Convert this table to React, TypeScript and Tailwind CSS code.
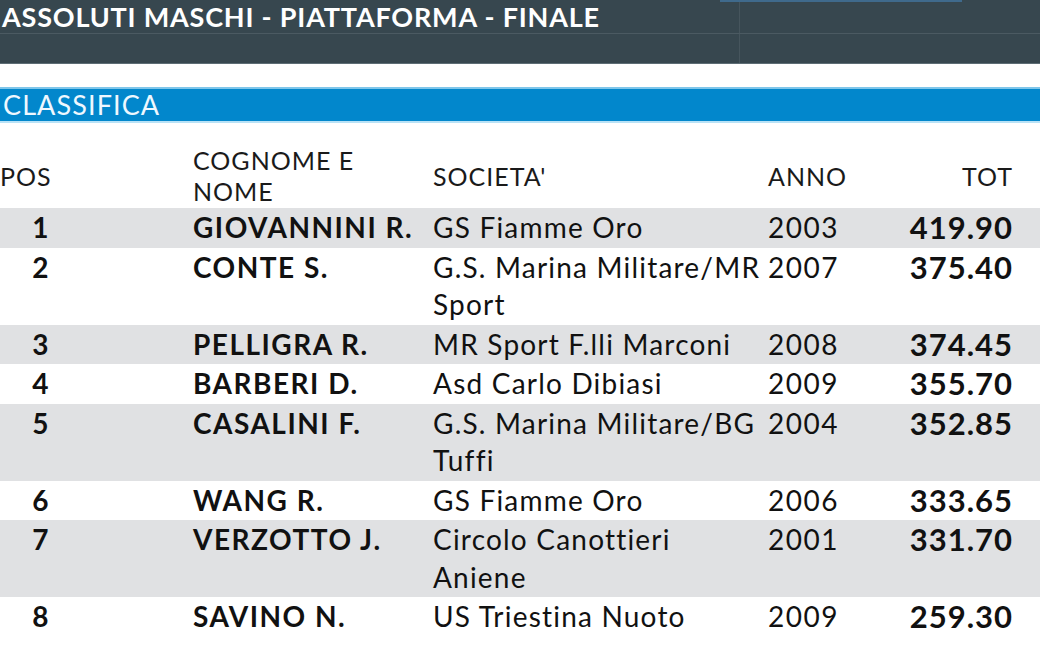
import React from 'react';

type Row = {
  pos: number;
  name: string;
  club: string;
  year: string;
  tot: string;
};

const rows: Row[] = [
  { pos: 1, name: 'GIOVANNINI R.', club: 'GS Fiamme Oro', year: '2003', tot: '419.90' },
  { pos: 2, name: 'CONTE S.', club: 'G.S. Marina Militare/MR Sport', year: '2007', tot: '375.40' },
  { pos: 3, name: 'PELLIGRA R.', club: 'MR Sport F.lli Marconi', year: '2008', tot: '374.45' },
  { pos: 4, name: 'BARBERI D.', club: 'Asd Carlo Dibiasi', year: '2009', tot: '355.70' },
  { pos: 5, name: 'CASALINI F.', club: 'G.S. Marina Militare/BG Tuffi', year: '2004', tot: '352.85' },
  { pos: 6, name: 'WANG R.', club: 'GS Fiamme Oro', year: '2006', tot: '333.65' },
  { pos: 7, name: 'VERZOTTO J.', club: 'Circolo Canottieri Aniene', year: '2001', tot: '331.70' },
  { pos: 8, name: 'SAVINO N.', club: 'US Triestina Nuoto', year: '2009', tot: '259.30' },
];

export default function App() {
  return (
    <div className="w-[1040px] h-[646px] overflow-hidden bg-white" style={{ fontFamily: 'Lato, "Open Sans", sans-serif' }}>
      {/* Event header */}
      <div className="relative bg-[#37474f] border-b border-[#5d6d75]">
        <div className="absolute top-0 left-[720px] w-[242px] h-[2px] bg-[#3f6a8c]" />
        <div className="flex h-[34px] border-b border-[#4b5a62]">
          <div className="w-[740px] border-r border-[#46555d] text-white text-[27px] font-bold tracking-[0.8px] leading-[34px] whitespace-nowrap pl-[2px]">
            ASSOLUTI MASCHI - PIATTAFORMA - FINALE
          </div>
          <div className="flex-1" />
        </div>
        <div className="flex h-[29px]">
          <div className="w-[740px] border-r border-[#46555d]" />
          <div className="flex-1" />
        </div>
      </div>

      <div className="h-[23px]" />

      {/* Section bar */}
      <div className="h-[36px] bg-[#0287cc] border-t-2 border-b-2 border-t-[#7fc6ea] border-b-[#b9e2f6] text-[#eef8ff] text-[27px] tracking-[1.1px] leading-[32px] pl-[3px]">
        CLASSIFICA
      </div>

      {/* Table */}
      <div className="mt-[21px] text-[#111]">
        <div className="grid grid-cols-[193px_240px_335px_1fr_150px] items-center h-[64px] text-[25px] tracking-[1px] leading-[31px] text-[#1a1a1a]">
          <div>POS</div>
          <div>
            COGNOME E<br />
            NOME
          </div>
          <div>SOCIETA'</div>
          <div>ANNO</div>
          <div className="text-right pr-[27px]">TOT</div>
        </div>

        {rows.map((r, i) => (
          <div
            key={r.pos}
            className={`grid grid-cols-[193px_240px_335px_1fr_150px] items-start py-[1px] text-[28px] tracking-[1.5px] leading-[37.5px] ${
              i % 2 === 0 ? 'bg-[#e0e1e3]' : 'bg-white'
            }`}
          >
            <div className="flex">
              <div className="w-[82px] text-center font-bold">{r.pos}</div>
            </div>
            <div className="font-bold whitespace-nowrap">{r.name}</div>
            <div className="tracking-[1.2px]">{r.club}</div>
            <div>{r.year}</div>
            <div className="text-right pr-[27px] font-bold text-[31px] tracking-[1px]">{r.tot}</div>
          </div>
        ))}
      </div>
    </div>
  );
}
